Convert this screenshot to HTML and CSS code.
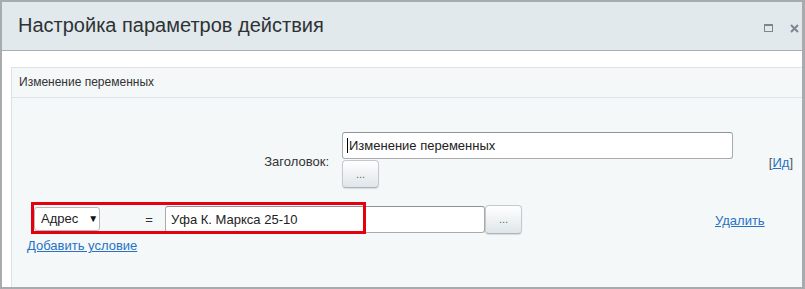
FILE: index.html
```html
<!DOCTYPE html>
<html lang="ru">
<head>
    <meta charset="UTF-8">
    <meta name="viewport" content="width=device-width, initial-scale=1.0">
    <title>Настройка параметров действия</title>
    <link rel="stylesheet" href="styles.css">
</head>
<body>
    <div class="dialog">
        <div class="dialog-head">
            <span class="dialog-title">Настройка параметров действия</span>
            <span class="dialog-tools">
                <span class="icon-max"></span>
                <svg class="icon-close" width="9" height="9" viewBox="0 0 9 9">
                    <path d="M1 1L8 8M8 1L1 8" stroke="#7b8691" stroke-width="2" />
                </svg>
            </span>
        </div>
        <div class="dialog-body">
            <div class="panel">
                <div class="panel-head">Изменение переменных</div>
                <div class="panel-body">
                    <div class="field-row">
                        <div class="field-label">Заголовок:</div>
                        <div class="field-input">
                            <div class="text-input title-input"><span class="caret"></span>Изменение переменных</div>
                            <button class="dots-btn">...</button>
                        </div>
                        <div class="field-id">[<a href="#">Ид</a>]</div>
                    </div>

                    <div class="cond-row">
                        <div class="select-box">Адрес <span class="select-arrow">▼</span></div>
                        <span class="cond-eq">=</span>
                        <div class="text-input cond-value">Уфа К. Маркса 25-10</div>
                        <button class="dots-btn">...</button>
                        <a class="cond-del" href="#">Удалить</a>
                        <div class="highlight"></div>
                    </div>

                    <a class="add-cond" href="#">Добавить условие</a>
                </div>
            </div>
        </div>
    </div>
</body>
</html>
```

FILE: styles.css
```css
* {
    margin: 0;
    padding: 0;
    box-sizing: border-box;
}

body {
    font-family: "Liberation Sans", Arial, sans-serif;
    font-size: 13px;
    color: #333;
    background: #fff;
}

.dialog {
    width: 805px;
    height: 289px;
    border: 2px solid #a8abae;
    border-right-width: 3px;
    overflow: hidden;
    display: flex;
    flex-direction: column;
}

.dialog-head {
    height: 49px;
    flex-shrink: 0;
    background: #e1e9ec;
    border-bottom: 1px solid #a9b0b5;
    display: flex;
    align-items: center;
    padding: 0 3px 0 16px;
}

.dialog-title {
    font-size: 20px;
    color: #2e3235;
    margin-top: -1px;
}

.dialog-tools {
    margin-left: auto;
    display: flex;
    align-items: center;
    gap: 17px;
    margin-top: 4px;
}

.icon-max {
    width: 9px;
    height: 8px;
    border: 1px solid #7b8691;
    border-top-width: 2px;
}

.dialog-body {
    flex: 1;
    padding: 16px 0 0 9px;
    display: flex;
}

.panel {
    flex: 1;
    background: #f5f8f9;
    border-top: 1px solid #dde4e8;
    border-left: 1px solid #dde4e8;
    display: flex;
    flex-direction: column;
}

.panel-head {
    height: 30px;
    line-height: 28px;
    padding-left: 7px;
    font-size: 12px;
    color: #333;
    border-bottom: 1px solid #dde4e8;
}

.panel-body {
    padding: 34px 9px 0 0;
}

.field-row {
    display: flex;
    align-items: center;
}

.field-label {
    width: 317px;
    text-align: right;
    margin-right: 13px;
    padding-top: 2px;
}

.field-input {
    width: 391px;
}

.text-input {
    height: 27px;
    background: #fff;
    border: 1px solid #a9acae;
    border-top-color: #8e9396;
    border-radius: 3px;
    padding: 0 5px;
    line-height: 25px;
    font-size: 13px;
    color: #222;
    display: flex;
    align-items: center;
}

.title-input {
    padding-left: 4px;
}

.caret {
    width: 1px;
    height: 15px;
    background: #000;
    margin-right: 1px;
}

.dots-btn {
    display: block;
    width: 37px;
    height: 28px;
    margin-top: 1px;
    border: 1px solid #c3cacd;
    border-bottom-color: #aeb5b9;
    border-radius: 4px;
    background: linear-gradient(#ffffff, #dfe6e9);
    box-shadow: 0 1px 1px rgba(0, 0, 0, 0.12);
    font-family: "Liberation Sans", Arial, sans-serif;
    font-size: 11px;
    color: #666;
    line-height: 20px;
}

.field-id {
    margin-left: auto;
    padding-top: 5px;
    color: #555;
}

a {
    color: #2772c4;
    text-decoration: underline;
}

.cond-row {
    position: relative;
    display: flex;
    align-items: center;
    margin-top: 16px;
    height: 30px;
}

.select-box {
    margin-left: 22px;
    width: 66px;
    height: 24px;
    background: #fff;
    border: 1px solid #b7babd;
    border-radius: 3px;
    display: flex;
    align-items: center;
    padding-left: 6px;
    color: #222;
    margin-top: -1px;
}

.select-arrow {
    font-size: 10px;
    margin-left: 10px;
    color: #111;
}

.cond-eq {
    width: 8px;
    margin: 0 12px 0 45px;
    text-align: center;
}

.cond-value {
    width: 320px;
    height: 27px;
}

.cond-row .dots-btn {
    height: 29px;
    margin-top: 0;
}

.cond-del {
    margin-left: 193px;
    padding-top: 2px;
}

.highlight {
    position: absolute;
    left: 19px;
    top: -2px;
    width: 335px;
    height: 32px;
    border: 3px solid #e5000e;
}

.add-cond {
    display: inline-block;
    margin: 4px 0 0 15px;
}
```
